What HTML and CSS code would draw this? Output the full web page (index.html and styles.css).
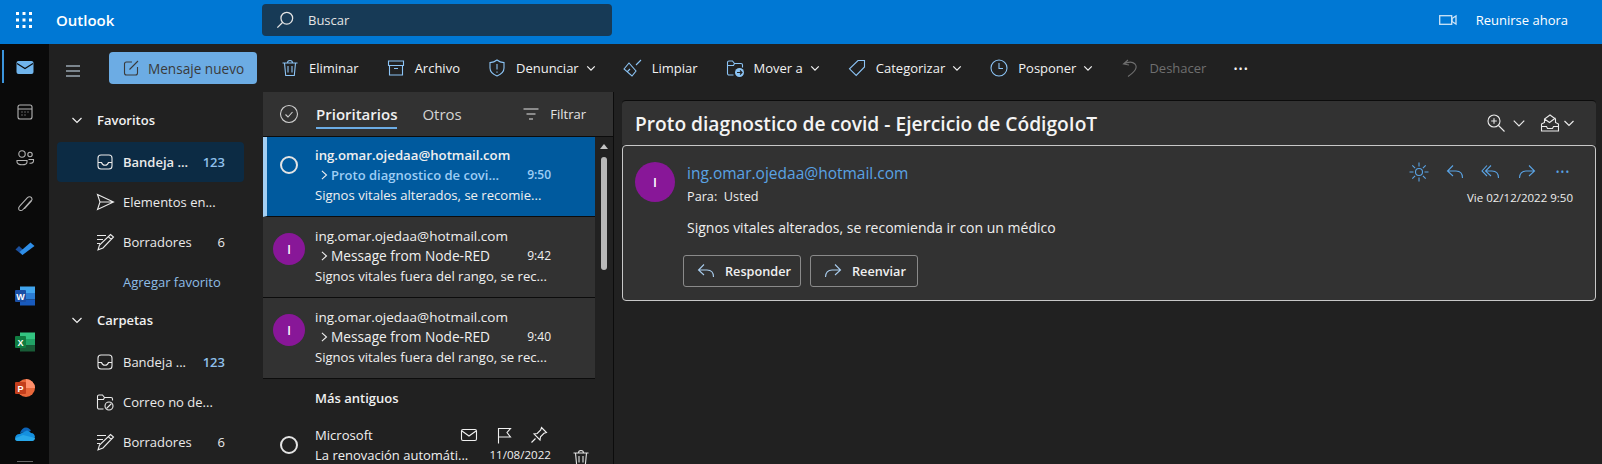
FILE: index.html
```html
<!DOCTYPE html>
<html lang="es">
<head>
    <meta charset="UTF-8">
    <title>Correo - Outlook</title>
    <link rel="stylesheet" href="styles.css">
</head>
<body>
    <!-- Shared icons -->
    <svg class="sprite" xmlns="http://www.w3.org/2000/svg">
        <symbol id="i-trash" viewBox="0 0 20 20"><path d="M2.500 5h15M7.500 5c0-3.300 5-3.300 5 0M4.500 5l1.200 12.500h8.600L15.500 5M8 8v6.500M12 8v6.500"/></symbol>
        <symbol id="i-archive" viewBox="0 0 20 20"><path d="M2.500 3h15v4.500h-15zM3.500 7.500V17h13V7.500M8 10.500h4"/></symbol>
        <symbol id="i-shield" viewBox="0 0 20 20"><path d="M10 2c2 1.700 4.300 2.500 7 2.600v5.400c0 3.700-2.500 6.200-7 8-4.500-1.800-7-4.300-7-8V4.600C5.700 4.500 8 3.700 10 2zM10 6v5.500M10 13.500v1.200"/></symbol>
        <symbol id="i-broom" viewBox="0 0 20 20"><path d="M1 11l5-6 7 8-4 5zM13 7l5-5M4 14l3-3"/></symbol>
        <symbol id="i-move" viewBox="0 0 20 20"><path d="M8.500 17H4c-.8 0-1.500-.7-1.500-1.500v-11C2.500 3.700 3.200 3 4 3h3.500l2 2.500H16c.8 0 1.500.7 1.500 1.500v2.500M2.500 7.500h6l1-2"/><circle class="solid" cx="14.500" cy="14.500" r="4.500"/><path class="dark" d="M12 14.500h5M15 12.500l2 2-2 2"/></symbol>
        <symbol id="i-tag" viewBox="0 0 20 20"><path d="M11 2.500h6.500V9l-8.300 8.500-6.700-6.700zM14.600 5.400h.1"/></symbol>
        <symbol id="i-clock" viewBox="0 0 20 20"><circle cx="10" cy="10" r="8"/><path d="M10 5v5.500h4"/></symbol>
        <symbol id="i-undo" viewBox="0 0 20 20"><path d="M8 2L3.500 6l5.500 1M3.500 6c4-2 9-2.500 11.500 0 3 3.500 0 7.500-7 12.500"/></symbol>
        <symbol id="i-filter" viewBox="0 0 20 20"><path d="M2.500 5h15M5.500 10h9M8 15h4"/></symbol>
        <symbol id="i-check" viewBox="0 0 20 20"><circle cx="10" cy="10" r="8.500"/><path d="M6.500 10.500l2.500 2.500 4.500-5"/></symbol>
        <symbol id="i-compose" viewBox="0 0 20 20"><path d="M16.500 9v6c0 1.100-.9 2-2 2h-9c-1.100 0-2-.9-2-2V6c0-1.100.9-2 2-2H11M8.500 11.500L17 3"/></symbol>
        <symbol id="i-inbox" viewBox="0 0 20 20"><rect x="3" y="3" width="14" height="14" rx="3"/><path d="M3 10.500h3.500c.5 1.700 1.900 2.700 3.500 2.700s3-1 3.500-2.700H17"/></symbol>
        <symbol id="i-send" viewBox="0 0 20 20"><path d="M2.500 2.500l16 7.500-16 7.500L5 10zM5 10h13.500"/></symbol>
        <symbol id="i-draft" viewBox="0 0 20 20"><path d="M2 3.500h9M2 7.500h6M2 11.500h3M15.500 2.500l3 2.500L8 16l-5 1.800L4.500 13zM13.500 4.800l2.800 2.500"/></symbol>
        <symbol id="i-junk" viewBox="0 0 20 20"><path d="M8.500 17H4c-.8 0-1.500-.7-1.500-1.500v-11C2.500 3.700 3.200 3 4 3h3.500l2 2.500H16c.8 0 1.500.7 1.500 1.500v1.500M2.500 7.500h6l1-2"/><circle cx="14" cy="14" r="4"/><path d="M11.500 16.500l5-5"/></symbol>
        <symbol id="i-mail" viewBox="0 0 20 20"><rect x="2.500" y="4.500" width="15" height="11" rx="1.500"/><path d="M3 6l7 5 7-5"/></symbol>
        <symbol id="i-flag" viewBox="0 0 20 20"><path d="M4.500 18.500V3.500h12l-3.500 4 3.500 4.500h-12"/></symbol>
        <symbol id="i-pin" viewBox="0 0 20 20"><path d="M12.500 2.500l5 5-2.500.8-3.500 3.500-.5 3.200-6-6 3.200-.5 3.500-3.500zM6.500 13.500L2.500 17.500"/></symbol>
        <symbol id="i-reply" viewBox="0 0 20 20"><path d="M8 3.500L2.500 9 8 14M2.500 9H11c4 0 6.500 2.500 6.500 7"/></symbol>
        <symbol id="i-forward" viewBox="0 0 20 20"><path d="M12 3.500L17.500 9 12 14M17.500 9H9c-4 0-6.500 2.500-6.500 7"/></symbol>
        <symbol id="i-replyall" viewBox="0 0 20 20"><path d="M6 3.500L1 9l5 5M10 3.500L4.500 9l5.500 5M4.500 9H11c4 0 6.500 2.500 6.500 7"/></symbol>
        <symbol id="i-sun" viewBox="0 0 20 20"><circle cx="10" cy="10" r="3.500"/><path d="M10 .5v4M10 15.500v4M.5 10h4M15.500 10h4M3.300 3.300l2.800 2.800M13.900 13.900l2.800 2.800M3.300 16.700l2.800-2.800M13.900 6.100l2.800-2.800"/></symbol>
        <symbol id="i-zoom" viewBox="0 0 20 20"><circle cx="8" cy="8" r="6"/><path d="M12.500 12.500l6 6M5.200 8h5.600M8 5.200v5.600"/></symbol>
        <symbol id="i-read" viewBox="0 0 20 20"><path d="M1.500 11l3-1.500V6l5.500-4 5.500 4v3.500l3 1.500v7h-17zM1.500 13.500h5l1 2h5l1-2h5M4.500 6l5 3.500L15.500 5"/></symbol>
        <symbol id="i-chevron" viewBox="0 0 12 12"><path d="M1.500 4L6 8.500 10.500 4"/></symbol>
        <symbol id="i-right" viewBox="0 0 12 12"><path d="M3.500 1L9 6l-5.500 5"/></symbol>
    </svg>

    <header class="topbar">
        <div class="waffle">
            <svg width="16" height="16" viewBox="0 0 16 16" fill="#fff"><rect width="3" height="3"/><rect x="6.500" width="3" height="3"/><rect x="13" width="3" height="3"/><rect y="6.500" width="3" height="3"/><rect x="6.500" y="6.500" width="3" height="3"/><rect x="13" y="6.500" width="3" height="3"/><rect y="13" width="3" height="3"/><rect x="6.500" y="13" width="3" height="3"/><rect x="13" y="13" width="3" height="3"/></svg>
        </div>
        <div class="brand">Outlook</div>
        <div class="search">
            <svg class="ic search-ic" viewBox="0 0 20 20"><path d="M7.500 12.500L1.500 18.500"/><circle cx="12" cy="8" r="6.500"/></svg>
            <span>Buscar</span>
        </div>
        <div class="meet">
            <svg width="18" height="12" viewBox="0 0 18 12" class="line"><rect x=".7" y="1.700" width="12" height="8.600"/><path d="M13 4.500l4-2.500v8l-4-2.500z"/></svg>
            <span>Reunirse ahora</span>
        </div>
    </header>

    <div class="app">
        <nav class="rail">
            <div class="rail-item active">
                <svg width="20" height="20" viewBox="0 0 20 20"><rect x="1.500" y="4" width="17" height="13" rx="2" fill="#70b4ec"/><path d="M2 6.500l8 5 8-5" fill="none" stroke="#0a0a0a" stroke-width="1.100"/></svg>
            </div>
            <div class="rail-item">
                <svg class="ic" viewBox="0 0 20 20"><rect x="3" y="3" width="14" height="14" rx="2"/><path d="M3 7h14M6.500 10h1M9.500 10h1M12.500 10h1M6.500 13h1M9.500 13h1"/></svg>
            </div>
            <div class="rail-item">
                <svg class="ic" viewBox="0 0 20 20"><circle cx="7" cy="6" r="3.200"/><circle cx="15" cy="6.500" r="2.200"/><path d="M2 12.500h10v1.500c0 1.500-2 2.800-5 2.800s-5-1.300-5-2.800zM13.500 11.500h5v1.500c0 1.300-1.300 2.300-4 2.300"/></svg>
            </div>
            <div class="rail-item">
                <svg class="ic" viewBox="0 0 20 20"><path d="M16 6.500L8 15.500c-1.500 1.700-3.800 1.200-4.300-.3-.3-1.100 0-2 1-3l7.800-8.500c1.200-1.300 3-1.200 4 0 .8 1 .7 2.300-.2 3.400l-6.800 7.500"/></svg>
            </div>
            <div class="rail-item">
                <svg width="20" height="20" viewBox="0 0 20 20"><path d="M0.500 9.500l3.500-3.500 6 5.500-2.500 3.500z" fill="#1b4f9c"/><path d="M7.500 15l-3-3L15.500 2.500l4 3.500z" fill="#2f8fe8"/></svg>
            </div>
            <div class="rail-item">
                <svg width="20" height="20" viewBox="0 0 20 20"><rect x="5" y="0.500" width="15" height="6.500" fill="#41a5ee"/><rect x="5" y="7" width="15" height="6.500" fill="#2b7cd3"/><rect x="5" y="13.500" width="15" height="6" fill="#185abd"/><rect y="4" width="11" height="12" rx="1" fill="#1a4fa5"/><text x="5.500" y="13.500" class="app-letter">W</text></svg>
            </div>
            <div class="rail-item">
                <svg width="20" height="20" viewBox="0 0 20 20"><rect x="5" y="0.500" width="15" height="6.500" fill="#33c481"/><rect x="5" y="7" width="15" height="6.500" fill="#21a366"/><rect x="5" y="13.500" width="15" height="6" fill="#185c37"/><rect y="4" width="11" height="12" rx="1" fill="#107c41"/><text x="5.500" y="13.500" class="app-letter">X</text></svg>
            </div>
            <div class="rail-item">
                <svg width="20" height="20" viewBox="0 0 20 20"><circle cx="11" cy="10" r="9" fill="#e8673a"/><path d="M11 1a9 9 0 0 1 9 9h-9z" fill="#ff8f6b"/><rect y="4" width="11" height="12" rx="1" fill="#c43e1c"/><text x="5.500" y="13.500" class="app-letter">P</text></svg>
            </div>
            <div class="rail-item">
                <svg width="20" height="14" viewBox="0 0 20 14"><path d="M5 6c1-3.500 3.500-5.500 6-5.500 2.200 0 4 1.200 5 3.500z" fill="#0c64b8"/><path d="M0 11.500C0 9 2 7 4.500 7L12 3.500c2 .5 3 1.500 4 2.500 2.500 0 4 2 4 4.500L12 13z" fill="#1490df"/><path d="M2 14c-1.200 0-2-1.200-2-2.500L8 8l12 3c0 1.500-1 3-2.500 3z" fill="#28a8ea"/></svg>
            </div>
            <div class="rail-end"></div>
        </nav>

        <div class="main">
            <div class="toolbar">
                <div class="burger"><svg class="ic" viewBox="0 0 20 20"><path d="M3 5h14M3 10h14M3 15h14"/></svg></div>
                <button class="new-msg">
                    <svg class="ic" viewBox="0 0 20 20"><use href="#i-compose"/></svg>
                    <span>Mensaje nuevo</span>
                </button>
                <div class="tools">
                    <div class="tool"><svg class="ic"><use href="#i-trash"/></svg><span>Eliminar</span></div>
                    <div class="tool"><svg class="ic"><use href="#i-archive"/></svg><span>Archivo</span></div>
                    <div class="tool"><svg class="ic"><use href="#i-shield"/></svg><span>Denunciar</span><svg class="chev"><use href="#i-chevron"/></svg></div>
                    <div class="tool"><svg class="ic"><use href="#i-broom"/></svg><span>Limpiar</span></div>
                    <div class="tool"><svg class="ic"><use href="#i-move"/></svg><span>Mover a</span><svg class="chev"><use href="#i-chevron"/></svg></div>
                    <div class="tool"><svg class="ic"><use href="#i-tag"/></svg><span>Categorizar</span><svg class="chev"><use href="#i-chevron"/></svg></div>
                    <div class="tool"><svg class="ic"><use href="#i-clock"/></svg><span>Posponer</span><svg class="chev"><use href="#i-chevron"/></svg></div>
                    <div class="tool disabled"><svg class="ic"><use href="#i-undo"/></svg><span>Deshacer</span></div>
                    <div class="tool more"><span>•••</span></div>
                </div>
            </div>

            <div class="panes">
                <aside class="folders">
                    <div class="folder-head"><svg class="chev"><use href="#i-chevron"/></svg><span>Favoritos</span></div>
                    <div class="folder selected"><svg class="ic"><use href="#i-inbox"/></svg><span class="folder-name">Bandeja ...</span><span class="count blue">123</span></div>
                    <div class="folder"><svg class="ic"><use href="#i-send"/></svg><span class="folder-name">Elementos en...</span></div>
                    <div class="folder"><svg class="ic"><use href="#i-draft"/></svg><span class="folder-name">Borradores</span><span class="count">6</span></div>
                    <div class="folder add">Agregar favorito</div>
                    <div class="folder-head second"><svg class="chev"><use href="#i-chevron"/></svg><span>Carpetas</span></div>
                    <div class="folder"><svg class="ic"><use href="#i-inbox"/></svg><span class="folder-name">Bandeja ...</span><span class="count blue">123</span></div>
                    <div class="folder"><svg class="ic"><use href="#i-junk"/></svg><span class="folder-name">Correo no de...</span></div>
                    <div class="folder"><svg class="ic"><use href="#i-draft"/></svg><span class="folder-name">Borradores</span><span class="count">6</span></div>
                </aside>

                <section class="list">
                    <div class="list-head">
                        <svg class="ic check"><use href="#i-check"/></svg>
                        <div class="tab on">Prioritarios</div>
                        <div class="tab">Otros</div>
                        <div class="filter"><svg class="ic"><use href="#i-filter"/></svg><span>Filtrar</span></div>
                    </div>
                    <div class="list-body">
                        <div class="items">
                            <div class="msg current">
                                <div class="msg-side"><span class="radio"></span></div>
                                <div class="msg-text">
                                    <div class="from">ing.omar.ojedaa@hotmail.com</div>
                                    <div class="subject"><svg class="arrow"><use href="#i-right"/></svg><span class="subj-text">Proto diagnostico de covi...</span><span class="time">9:50</span></div>
                                    <div class="preview">Signos vitales alterados, se recomie...</div>
                                </div>
                            </div>
                            <div class="msg">
                                <div class="msg-side"><span class="avatar small">I</span></div>
                                <div class="msg-text">
                                    <div class="from">ing.omar.ojedaa@hotmail.com</div>
                                    <div class="subject"><svg class="arrow"><use href="#i-right"/></svg><span class="subj-text">Message from Node-RED</span><span class="time">9:42</span></div>
                                    <div class="preview">Signos vitales fuera del rango, se rec...</div>
                                </div>
                            </div>
                            <div class="msg">
                                <div class="msg-side"><span class="avatar small">I</span></div>
                                <div class="msg-text">
                                    <div class="from">ing.omar.ojedaa@hotmail.com</div>
                                    <div class="subject"><svg class="arrow"><use href="#i-right"/></svg><span class="subj-text">Message from Node-RED</span><span class="time">9:40</span></div>
                                    <div class="preview">Signos vitales fuera del rango, se rec...</div>
                                </div>
                            </div>
                            <div class="group">Más antiguos</div>
                            <div class="msg plain">
                                <div class="msg-side"><span class="radio"></span></div>
                                <div class="msg-text">
                                    <div class="from-row">
                                        <span>Microsoft</span>
                                        <span class="quick">
                                            <svg class="ic"><use href="#i-mail"/></svg>
                                            <svg class="ic"><use href="#i-flag"/></svg>
                                            <svg class="ic"><use href="#i-pin"/></svg>
                                        </span>
                                    </div>
                                    <div class="subject"><span class="subj-plain">La renovación automáti...</span><span class="time">11/08/2022</span></div>
                                </div>
                                <svg class="ic row-trash"><use href="#i-trash"/></svg>
                            </div>
                        </div>
                        <div class="scrollbar">
                            <div class="scroll-up"></div>
                            <div class="scroll-thumb"></div>
                        </div>
                    </div>
                </section>

                <section class="reading">
                    <div class="read-head">
                        <h1>Proto diagnostico de covid - Ejercicio de CódigoIoT</h1>
                        <div class="read-tools">
                            <svg class="ic zoom-ic"><use href="#i-zoom"/></svg>
                            <svg class="chev wide"><use href="#i-chevron"/></svg>
                            <svg class="ic read-ic"><use href="#i-read"/></svg>
                            <svg class="chev"><use href="#i-chevron"/></svg>
                        </div>
                    </div>
                    <article class="card">
                        <span class="avatar">I</span>
                        <div class="card-main">
                            <div class="sender">ing.omar.ojedaa@hotmail.com</div>
                            <div class="to">Para:&nbsp; Usted</div>
                            <p class="body-text">Signos vitales alterados, se recomienda ir con un médico</p>
                            <div class="actions">
                                <button class="act"><svg class="ic"><use href="#i-reply"/></svg>Responder</button>
                                <button class="act"><svg class="ic"><use href="#i-forward"/></svg>Reenviar</button>
                            </div>
                        </div>
                        <div class="card-side">
                            <div class="card-icons">
                                <svg class="ic"><use href="#i-sun"/></svg>
                                <svg class="ic"><use href="#i-reply"/></svg>
                                <svg class="ic"><use href="#i-replyall"/></svg>
                                <svg class="ic"><use href="#i-forward"/></svg>
                                <span class="card-more">•••</span>
                            </div>
                            <div class="date">Vie 02/12/2022 9:50</div>
                        </div>
                    </article>
                </section>
            </div>
        </div>
    </div>
</body>
</html>
```

FILE: styles.css
```css
* {
    box-sizing: border-box;
}

html, body {
    height: 464px;
    overflow: hidden;
}

body {
    margin: 0;
    font-family: "Open Sans", "Noto Sans", Arial, sans-serif;
    font-size: 13px;
    color: #eee;
    background-color: #212121;
}

.sprite {
    display: none;
}

svg {
    display: block;
    flex: none;
}

.ic {
    width: 20px;
    height: 20px;
    fill: none;
    stroke: currentColor;
    stroke-width: 1.1;
}

.chev {
    width: 12px;
    height: 12px;
    fill: none;
    stroke: currentColor;
    stroke-width: 1.2;
}

.solid {
    fill: #8cc4f5;
    stroke: none;
}

.dark {
    stroke: #212121;
}

.line {
    fill: none;
    stroke: #cde4f7;
    stroke-width: 1.3;
}

/* Top bar */
.topbar {
    display: flex;
    align-items: center;
    height: 44px;
    padding-bottom: 4px;
    background-color: #0078d4;
    color: #fff;
}

.waffle {
    width: 56px;
    padding-left: 16px;
}

.brand {
    width: 206px;
    font-size: 15px;
    font-weight: 600;
}

.search {
    display: flex;
    align-items: center;
    gap: 14px;
    width: 350px;
    height: 32px;
    padding-left: 14px;
    border-radius: 4px;
    background-color: #173a56;
    color: #e4e4e4;
}

.search-ic {
    width: 18px;
    height: 18px;
    stroke-width: 1.4;
}

.meet {
    display: flex;
    align-items: center;
    gap: 19px;
    margin-left: auto;
    margin-right: 34px;
}

/* App rail */
.app {
    display: flex;
    height: 420px;
}

.rail {
    flex: none;
    width: 49px;
    background-color: #0a0a0a;
    color: #b4b4b4;
    overflow: hidden;
}

.rail-item {
    position: relative;
    display: flex;
    align-items: center;
    justify-content: center;
    height: 46px;
}

.rail-item:first-child {
    height: 45px;
}

.rail-item.active::before {
    content: "";
    position: absolute;
    left: 2px;
    top: 6px;
    width: 2px;
    height: 33px;
    background-color: #3b94dc;
}

.app-letter {
    font-family: "Liberation Sans", sans-serif;
    font-size: 9px;
    font-weight: 700;
    fill: #fff;
    text-anchor: middle;
}

.rail-end {
    width: 16px;
    height: 1px;
    margin: 4px auto 0;
    background-color: #666;
}

/* Toolbar */
.main {
    flex: 1;
    min-width: 0;
}

.toolbar {
    display: flex;
    align-items: center;
    height: 48px;
}

.burger {
    width: 60px;
    padding: 5px 0 0 14px;
    color: #d6e9f9;
}

.new-msg {
    display: flex;
    align-items: center;
    gap: 7px;
    width: 148px;
    height: 32px;
    padding: 0 12px;
    border: none;
    border-radius: 4px;
    background-color: #6cace4;
    color: #3a3a3a;
    font: inherit;
    font-size: 13.6px;
    white-space: nowrap;
}

.tools {
    display: flex;
    align-items: center;
    gap: 27px;
    margin-left: 23px;
}

.tool {
    display: flex;
    align-items: center;
    gap: 9px;
    color: #f2f2f2;
}

.tool .ic {
    color: #8cc4f5;
}

.tool .chev {
    margin-left: -2px;
    width: 10px;
    height: 10px;
    stroke-width: 1.5;
}

.tool.disabled, .tool.disabled .ic {
    color: #6f6f6f;
}

.tool.more {
    font-size: 11px;
    letter-spacing: 1px;
}

/* Panes */
.panes {
    display: flex;
    height: 372px;
}

/* Folder tree */
.folders {
    flex: none;
    width: 214px;
    padding-top: 8px;
}

.folder-head {
    display: flex;
    align-items: center;
    gap: 14px;
    height: 42px;
    padding: 0 0 2px 22px;
    font-weight: 600;
    color: #f0f0f0;
}

.folder-head.second {
    height: 38px;
    margin-bottom: 2px;
}

.folder {
    display: flex;
    align-items: center;
    width: 187px;
    height: 40px;
    margin-left: 8px;
    padding: 0 19px 0 40px;
    border-radius: 4px;
    color: #eaeaea;
}

.folder .ic {
    margin-right: 8px;
    margin-left: -2px;
}

.folder-name {
    flex: 1;
    white-space: nowrap;
}

.folder.selected {
    background-color: #0c2b44;
    font-weight: 600;
}

.count {
    font-weight: 400;
}

.count.blue {
    color: #8fc0ec;
    font-weight: 600;
}

.folder.add {
    padding-left: 66px;
    color: #8fbde6;
    white-space: nowrap;
}

/* Message list */
.list {
    flex: none;
    width: 351px;
    border-right: 1px solid #0c0c0c;
}

.list-head {
    display: flex;
    align-items: center;
    height: 45px;
    padding-left: 16px;
    border-bottom: 1px solid #0c0c0c;
    background-color: #323232;
}

.check {
    color: #cfcfcf;
}

.tab {
    position: relative;
    margin-left: 17px;
    font-size: 15px;
    color: #d4d4d4;
}

.tab + .tab {
    margin-left: 25px;
}

.tab.on {
    font-weight: 600;
    color: #f0f0f0;
}

.tab.on::after {
    content: "";
    position: absolute;
    left: 0;
    right: 0;
    bottom: -5px;
    height: 2px;
    background-color: #6cace4;
}

.filter {
    display: flex;
    align-items: center;
    gap: 9px;
    margin-left: auto;
    margin-right: 27px;
    color: #e4e4e4;
}

.list-body {
    display: flex;
}

.items {
    flex: 1;
    min-width: 0;
}

.msg {
    display: flex;
    height: 81px;
    border-bottom: 1px solid #0c0c0c;
    background-color: #323232;
}

.msg.current {
    height: 80px;
    border-left: 4px solid #a3cff3;
    background-color: #005a9e;
}

.msg-side {
    display: flex;
    align-items: flex-start;
    justify-content: center;
    flex: none;
    width: 52px;
    padding-top: 16px;
}

.msg.current .msg-side {
    width: 48px;
    padding: 19px 4px 0 0;
}

.msg.current .msg-text {
    padding-top: 8px;
}

.radio {
    width: 18px;
    height: 18px;
    border: 2px solid #e4e4e4;
    border-radius: 50%;
}

.avatar {
    display: flex;
    align-items: center;
    justify-content: center;
    flex: none;
    width: 40px;
    height: 40px;
    border-radius: 50%;
    background-color: #881798;
    color: #fff;
    font-weight: 600;
}

.avatar.small {
    width: 32px;
    height: 32px;
    font-size: 12px;
}

.msg-text {
    flex: 1;
    min-width: 0;
    padding: 9px 44px 0 0;
    font-size: 13.1px;
    line-height: 20px;
    color: #f0f0f0;
}

.from {
    font-size: 13.5px;
    white-space: nowrap;
}

.msg.current .from {
    font-size: 13.2px;
    font-weight: 600;
}

.subject {
    display: flex;
    align-items: center;
    font-size: 13.7px;
    white-space: nowrap;
}

.arrow {
    width: 10px;
    height: 10px;
    margin: 0 2px 0 4px;
    fill: none;
    stroke: currentColor;
    stroke-width: 1.3;
}

.subj-text, .subj-plain {
    flex: 1;
}

.msg.current .subj-text, .msg.current .time {
    color: #9dcdf5;
    font-size: 13px;
    font-weight: 600;
}

.time {
    font-size: 12px;
}

.msg.current .time {
    font-size: 12px;
}

.subj-plain {
    font-size: 13px;
}

.plain .time {
    font-size: 11.6px;
}

.preview {
    white-space: nowrap;
}

.group {
    height: 38px;
    padding-top: 10px;
    padding-left: 52px;
    font-weight: 600;
    color: #f0f0f0;
}

.msg.plain {
    position: relative;
    height: 47px;
    border: none;
    background: none;
}

.msg.plain .msg-side {
    padding-top: 19px;
}

.msg.plain .msg-text {
    padding-top: 8px;
}

.from-row {
    display: flex;
    justify-content: space-between;
    align-items: center;
}

.quick {
    display: flex;
    gap: 15px;
    margin-right: 2px;
    color: #f0f0f0;
}

.row-trash {
    position: absolute;
    right: 4px;
    top: 31px;
    color: #e4e4e4;
}

.scrollbar {
    flex: none;
    width: 18px;
    padding-top: 7px;
}

.scroll-up {
    width: 0;
    margin: 0 auto;
    border: 4px solid transparent;
    border-top: none;
    border-bottom: 5px solid #c4c4c4;
}

.scroll-thumb {
    width: 6px;
    height: 113px;
    margin: 8px auto 0;
    border-radius: 3px;
    background-color: #b8b8b8;
}

/* Reading pane */
.reading {
    flex: 1;
    min-width: 0;
    padding: 8px 6px 0 8px;
}

.read-head {
    display: flex;
    align-items: center;
    height: 45px;
    padding: 0 21px 0 13px;
    border-top: 1px solid #0c0c0c;
    border-radius: 4px 4px 0 0;
    background-color: #323232;
}

.read-head h1 {
    flex: 1;
    margin: 0;
    font-size: 19.2px;
    font-weight: 600;
    color: #f4f4f4;
}

.read-tools {
    display: flex;
    align-items: center;
    color: #eaeaea;
}

.zoom-ic {
    margin-right: 6px;
}

.read-tools .wide {
    width: 14px;
    height: 14px;
    stroke-width: 1;
}

.read-ic {
    margin: 0 3px 0 14px;
}

.card {
    display: flex;
    height: 156px;
    padding: 16px 22px 0 12px;
    border: 1px solid #c8c8c8;
    border-radius: 4px;
    background-color: #323232;
}

.card-main {
    flex: 1;
    margin-left: 12px;
}

.sender {
    font-size: 15.5px;
    line-height: 22px;
    color: #5aa3e4;
}

.to {
    margin-top: 2px;
    line-height: 20px;
    font-size: 12.7px;
}

.body-text {
    margin: 12px 0 17px;
    font-size: 14px;
    line-height: 20px;
}

.actions {
    display: flex;
    gap: 4px;
    margin-left: -4px;
}

.act {
    display: flex;
    align-items: center;
    gap: 9px;
    height: 32px;
    padding: 0 9px 0 12px;
    border: 1px solid #8a8a8a;
    border-radius: 3px;
    background: none;
    color: #f0f0f0;
    font: inherit;
    font-weight: 600;
    font-size: 12.7px;
}

.act + .act {
    margin-left: 5px;
    padding-right: 11px;
}

.act .ic {
    color: #a9cdee;
}

.card-side {
    display: flex;
    flex-direction: column;
    align-items: flex-end;
}

.card-icons {
    display: flex;
    align-items: center;
    gap: 16px;
    color: #5aa3e4;
}

.card-more {
    width: 20px;
    font-size: 10px;
    letter-spacing: 1px;
    text-align: center;
}

.date {
    margin-top: 8px;
    font-size: 11.5px;
}
```
